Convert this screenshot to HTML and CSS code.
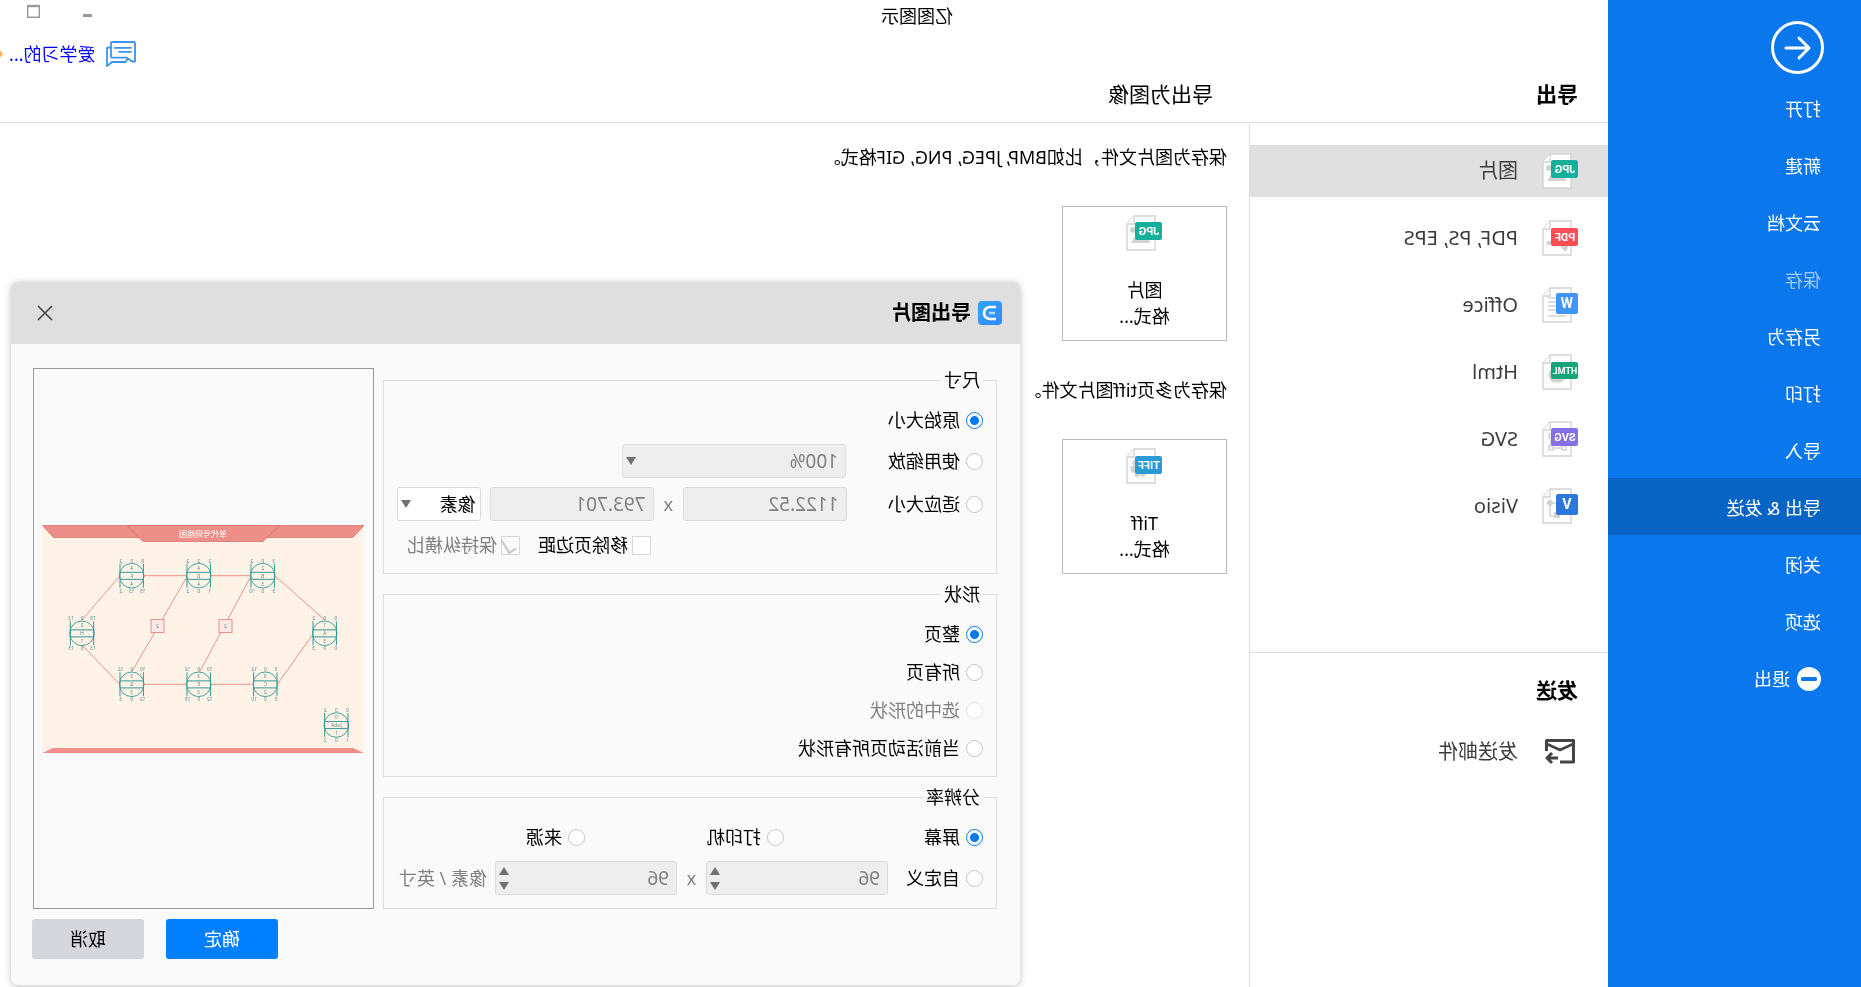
FILE: index.html
```
<!DOCTYPE html>
<html lang="zh-CN">
<head>
<meta charset="utf-8">
<title>亿图图示</title>
<link rel="stylesheet" href="styles.css">
</head>
<body>
<svg class="defs" aria-hidden="true">
  <defs>
    <g id="doc">
      <path d="M7 1H28L35 9V35H7Z" fill="#fff" stroke="#d3d3d3" stroke-width="1.4"/>
      <path d="M28 1V9H35" fill="#fff" stroke="#d3d3d3" stroke-width="1.4"/>
    </g>
    <g id="ring" fill="none" stroke="#2f9a94">
      <circle r="12.3" fill="#fff3e8" stroke-width="0.9"/>
      <path d="M-11.7-12V12M11.7-12V12M-11.7-3.4H11.7M-11.7 3.6H11.7"/>
    </g>
    <linearGradient id="brand" x1="1" y1="0" x2="0" y2="1">
      <stop offset="0" stop-color="#35a3fb"/><stop offset="1" stop-color="#2f8bfa"/>
    </linearGradient>
  </defs>
</svg>
<div class="app">
  <nav class="sidebar">
    <button class="back" aria-label="返回">
      <svg width="54" height="54" viewBox="0 0 54 54" fill="none" stroke="#fff" stroke-width="3" stroke-linecap="round" stroke-linejoin="round"><circle cx="27.500" cy="27.500" r="25"/><path d="M39 28H17M26 18L16 28L26 38"/></svg>
    </button>
    <ul class="menu">
      <li><a href="#">打开</a></li>
      <li><a href="#">新建</a></li>
      <li><a href="#">云文档</a></li>
      <li><a href="#" class="faded">保存</a></li>
      <li><a href="#">另存为</a></li>
      <li><a href="#">打印</a></li>
      <li><a href="#">导入</a></li>
      <li><a href="#" class="current">导出 &amp; 发送</a></li>
      <li><a href="#">关闭</a></li>
      <li><a href="#">选项</a></li>
      <li><a href="#"><svg width="24" height="24" viewBox="0 0 24 24"><circle cx="12" cy="12" r="12" fill="#fff"/><rect x="4" y="10" width="16" height="4" rx="1.5" fill="#0a77ec"/></svg>退出</a></li>
    </ul>
  </nav>

  <div class="workspace">
    <header class="top">
      <div class="titlebar">
        <span>亿图图示</span>
        <div class="window-buttons">
          <button aria-label="最小化"><svg width="10" height="14" viewBox="0 0 10 14"><path d="M0 11.500H9" stroke="#999" stroke-width="3"/></svg></button>
          <button aria-label="最大化"><svg width="13" height="14" viewBox="0 0 13 14"><path d="M.7 2H12.300V13.300H.7Z" fill="none" stroke="#999" stroke-width="1.4"/><path d="M0 2H13" stroke="#999" stroke-width="2.4"/></svg></button>
        </div>
      </div>
      <div class="account">
        <svg width="30" height="26" viewBox="0 0 30 26" fill="none" stroke="#3a94ef" stroke-width="1.8" stroke-linejoin="round" stroke-linecap="round"><path d="M1 2Q1 1 2 1H24Q25 1 25 2V15.500Q25 16.700 24 16.700H9L4 20.500H1Z"/><path d="M25.500 6.500H28Q29 6.500 29 7.500V25L24 21H10.500L8.500 18"/><path d="M5 6.800H21.500M5 10.800H17"/></svg>
        <a href="#">爱学习的...</a>
        <svg class="gem" width="3" height="10" viewBox="0 0 3 10"><path d="M0 5L4 0V10Z" fill="#fbb54c"/></svg>
      </div>
      <div class="headings">
        <h1>导出</h1>
        <h2>导出为图像</h2>
      </div>
    </header>

    <div class="columns">
      <aside class="kinds">
        <section class="export-kinds">
          <button class="kind selected">
            <svg width="36" height="36" viewBox="0 0 36 36"><use href="#doc"/><circle cx="29" cy="15" r="3" fill="#d3d3d3"/><path d="M11 28L16 22L22 24L26 20L31 28Z" fill="#d3d3d3"/><rect y="7" width="27" height="18" rx="2" fill="#14b09c"/><text class="badge" x="13" y="20">JPG</text></svg>
            图片
          </button>
          <button class="kind">
            <svg width="36" height="36" viewBox="0 0 36 36"><use href="#doc"/><path d="M10 26Q10 31 13 31Q16 30 18 25H30Q33 25 31 21H12Z" fill="#d3d3d3"/><rect y="8" width="27" height="18" rx="2" fill="#ff4d55"/><text class="badge" x="13" y="21">PDF</text></svg>
            PDF, PS, EPS
          </button>
          <button class="kind">
            <svg width="36" height="36" viewBox="0 0 36 36"><use href="#doc"/><path d="M20 11H30M20 15H30M20 19H30M20 23H30M12 29H30" stroke="#d3d3d3" stroke-width="1.5"/><rect y="6" width="22" height="21" rx="2" fill="#3f96ff"/><text class="badge big" x="11" y="21">W</text></svg>
            Office
          </button>
          <button class="kind">
            <svg width="36" height="36" viewBox="0 0 36 36"><use href="#doc"/><circle cx="21" cy="21" r="8.5" fill="#d3d3d3"/><path d="M12 27Q18 31 23 28" stroke="#fff" fill="none"/><rect y="8" width="27" height="17" rx="2" fill="#15a378"/><text class="badge small" x="13" y="20">HTML</text></svg>
            Html
          </button>
          <button class="kind">
            <svg width="36" height="36" viewBox="0 0 36 36"><use href="#doc"/><path d="M12 25H16V29H12ZM25 25H29V29H25ZM25 13H29V17H25ZM16 27H25M27 17V25" stroke="#d3d3d3" stroke-width="1.5" fill="none"/><rect y="7" width="27" height="18" rx="2" fill="#8570e6"/><text class="badge" x="13" y="20">SVG</text></svg>
            SVG
          </button>
          <button class="kind">
            <svg width="36" height="36" viewBox="0 0 36 36"><use href="#doc"/><path d="M28 11L32 15L28 19L24 15ZM18 24H24V30H18Z" fill="#d3d3d3"/><path d="M28 15V28H22M20 15H26" stroke="#d3d3d3" stroke-width="1.5" fill="none"/><rect y="6" width="22" height="21" rx="2" fill="#2b77da"/><text class="badge big" x="11" y="21">V</text></svg>
            Visio
          </button>
        </section>
        <section class="send-kinds">
          <h3>发送</h3>
          <button class="kind">
            <svg width="36" height="36" viewBox="-3 -5 36 36" fill="none" stroke="#444" stroke-width="3" stroke-linejoin="round"><path d="M15 23H1.500V1.500H28.500V12"/><path d="M2 5L15 11L28 5" stroke-width="2.6"/><path d="M17 19H28M23 14L28 19L23 24"/></svg>
            发送邮件
          </button>
        </section>
      </aside>

      <main class="formats">
        <p>保存为图片文件，比如BMP, JPEG, PNG, GIF格式。</p>
        <button class="card">
          <svg width="36" height="36" viewBox="0 0 36 36"><use href="#doc"/><circle cx="29" cy="15" r="3" fill="#d3d3d3"/><path d="M11 28L16 22L22 24L26 20L31 28Z" fill="#d3d3d3"/><rect y="7" width="27" height="18" rx="2" fill="#14b09c"/><text class="badge" x="13" y="20">JPG</text></svg>
          <span>图片<br>格式...</span>
        </button>
        <p>保存为多页tiff图片文件。</p>
        <button class="card">
          <svg width="36" height="36" viewBox="0 0 36 36"><use href="#doc"/><circle cx="22" cy="20" r="7" fill="none" stroke="#d3d3d3" stroke-width="5" stroke-dasharray="4 2"/><circle cx="22" cy="20" r="6" fill="none" stroke="#d3d3d3" stroke-width="3"/><rect y="8" width="27" height="18" rx="2" fill="#2a9bd5"/><text class="badge" x="13" y="21">TIFF</text></svg>
          <span>Tiff<br>格式...</span>
        </button>
      </main>
    </div>
  </div>

  <form class="dialog" role="dialog" aria-label="导出图片">
    <header class="dialog-title">
      <svg width="24" height="24" viewBox="0 0 24 24"><rect width="24" height="24" rx="4" fill="url(#brand)"/><path d="M6 6H12A6 6 0 0 1 12 18H6" fill="none" stroke="#fff" stroke-width="2.6"/><path d="M7 12H13" stroke="#b5daff" stroke-width="2.4"/></svg>
      <h2>导出图片</h2>
      <button type="button" class="close" aria-label="关闭"><svg width="16" height="16" viewBox="0 0 16 16"><path d="M1 1L15 15M15 1L1 15" stroke="#444" stroke-width="1.6"/></svg></button>
    </header>

    <div class="dialog-body">
      <div class="options">
        <fieldset>
          <legend>尺寸</legend>
          <div class="row"><label><input type="radio" name="size" checked>原始大小</label></div>
          <div class="row tall">
            <label class="lead"><input type="radio" name="size">使用缩放</label>
            <span class="drop zoom"><select disabled aria-label="缩放"><option>100%</option></select></span>
          </div>
          <div class="row tall">
            <label class="lead"><input type="radio" name="size">适应大小</label>
            <input class="box" type="text" value="1122.52" disabled aria-label="宽度">
            <span class="times">x</span>
            <input class="box" type="text" value="793.701" disabled aria-label="高度">
            <span class="drop unit"><select aria-label="单位"><option>像素</option></select></span>
          </div>
          <div class="row checks">
            <label><input type="checkbox">移除页边距</label>
            <label class="off"><input type="checkbox" checked disabled>保持纵横比</label>
          </div>
        </fieldset>

        <fieldset class="shapes">
          <legend>形状</legend>
          <div class="row"><label><input type="radio" name="shape" checked>整页</label></div>
          <div class="row"><label><input type="radio" name="shape">所有页</label></div>
          <div class="row"><label class="off"><input type="radio" name="shape" disabled>选中的形状</label></div>
          <div class="row"><label><input type="radio" name="shape">当前活动页所有形状</label></div>
        </fieldset>

        <fieldset>
          <legend>分辨率</legend>
          <div class="row thirds">
            <label><input type="radio" name="dpi" checked>屏幕</label>
            <label><input type="radio" name="dpi">打印机</label>
            <label><input type="radio" name="dpi">来源</label>
          </div>
          <div class="row tall">
            <label class="custom"><input type="radio" name="dpi">自定义</label>
            <span class="spin"><input type="number" value="96" disabled aria-label="水平分辨率"></span>
            <span class="times">x</span>
            <span class="spin"><input type="number" value="96" disabled aria-label="垂直分辨率"></span>
            <span class="per">像素 / 英寸</span>
          </div>
        </fieldset>
      </div>

      <div class="preview">
        <svg width="322" height="228" viewBox="0 0 322 228">
          <rect width="322" height="228" fill="#fff3e8"/>
          <g fill="#ee8e88" stroke="#d67670" stroke-width="0.8">
            <path d="M0 .5H321.500L310.500 12.500H11Z"/>
            <path d="M84.300 .5H237.300L221 16.500H101Z"/>
          </g>
          <path d="M11 223H311L321.500 228H0Z" fill="#ee8e88"/>
          <text class="sheet-title" x="161" y="12">单代号网络图</text>
          <path d="M39.300 95L89.300 50.700M51 109L86.700 159.300M112.700 50.700H153.700M113.300 51.700L164.300 146.700M177 51.700L232 146.700M177 50.700H220.300M244.300 51L282 95M281 121L244.300 159.300M177 159.300H220.300M112.700 159.300H153.700" fill="none" stroke="#f0908a"/>
          <g fill="#fbe9ea" stroke="#ee8e88"><rect x="200" y="94.500" width="13" height="13"/><rect x="132" y="94.500" width="13" height="13"/></g>
          <g class="node"><text x="206.500" y="103">2</text><text x="138.500" y="103">2</text></g>
          <g class="node" transform="translate(232.300 50.700)"><use href="#ring"/><text x="-11" y="-13">0</text><text y="-13">0</text><text x="11" y="-13">2</text><text y="-6">4</text><text y="2">F</text><text y="10">4</text><text x="-11" y="17">15</text><text y="17">13</text><text x="11" y="17">2</text></g>
          <g class="node" transform="translate(165.300 50.700)"><use href="#ring"/><text x="-11" y="-13">2</text><text y="-13">2</text><text x="11" y="-13">2</text><text y="-6">4</text><text y="2">D</text><text y="10">4</text><text x="-11" y="17">1</text><text y="17">0</text><text x="11" y="17">2</text></g>
          <g class="node" transform="translate(101.300 50.700)"><use href="#ring"/><text x="-11" y="-13">3</text><text y="-13">0</text><text x="11" y="-13">2</text><text y="-6">2</text><text y="2">B</text><text y="10">3</text><text x="-11" y="17">5</text><text y="17">0</text><text x="11" y="17">10</text></g>
          <g class="node" transform="translate(282 108.300)"><use href="#ring"/><text x="-11" y="-13">15</text><text y="-13">0</text><text x="11" y="-13">13</text><text y="-6">2</text><text y="2">H</text><text y="10">1</text><text x="-11" y="17">13</text><text y="17">0</text><text x="11" y="17">15</text></g>
          <g class="node" transform="translate(39.300 108.300)"><use href="#ring"/><text x="-11" y="-13">0</text><text y="-13">0</text><text x="11" y="-13">2</text><text y="-6">1</text><text y="2">A</text><text y="10">3</text><text x="-11" y="17">0</text><text y="17">0</text><text x="11" y="17">3</text></g>
          <g class="node" transform="translate(232.300 159.300)"><use href="#ring"/><text x="-11" y="-13">10</text><text y="-13">0</text><text x="11" y="-13">12</text><text y="-6">3</text><text y="2">G</text><text y="10">3</text><text x="-11" y="17">12</text><text y="17">0</text><text x="11" y="17">3</text></g>
          <g class="node" transform="translate(165.300 159.300)"><use href="#ring"/><text x="-11" y="-13">10</text><text y="-13">0</text><text x="11" y="-13">12</text><text y="-6">3</text><text y="2">E</text><text y="10">3</text><text x="-11" y="17">12</text><text y="17">0</text><text x="11" y="17">15</text></g>
          <g class="node" transform="translate(98.700 159.300)"><use href="#ring"/><text x="-11" y="-13">3</text><text y="-13">0</text><text x="11" y="-13">12</text><text y="-6">3</text><text y="2">C</text><text y="10">2</text><text x="-11" y="17">3</text><text y="17">0</text><text x="11" y="17">10</text></g>
          <g class="node" transform="translate(27.700 200)"><use href="#ring"/><text x="-11" y="-13">0</text><text y="-13">0</text><text x="11" y="-13">2</text><text y="-6">0</text><text y="2">JobA</text><text y="10">1</text><text x="-11" y="17">1</text><text y="17">0</text><text x="11" y="17">2</text></g>
        </svg>
      </div>
    </div>

    <footer class="dialog-actions">
      <button type="button" class="ok">确定</button>
      <button type="button" class="cancel">取消</button>
    </footer>
  </form>
</div>
</body>
</html>
```
FILE: styles.css
```
* { box-sizing: border-box; }

body {
  margin: 0;
  overflow: hidden;
  font: 18px/24px "Noto Sans", "Noto Sans CJK SC", sans-serif;
  font-weight: 400;
  color: #000;
  background: #fff;
}

button, input, select { font: inherit; color: inherit; }
button { border: 0; padding: 0; background: none; cursor: pointer; }
svg { flex: none; display: block; }
h1, h2, h3, p, ul { margin: 0; padding: 0; }
.defs { position: absolute; width: 0; height: 0; }

/* The whole window is shown mirrored */
.app {
  position: relative;
  display: flex;
  min-height: 100vh;
  transform: scaleX(-1);
}

/* Sidebar */
.sidebar { flex: 0 0 253px; background: #0a77ec; color: #fff; }
.back { display: block; margin: 20px 0 5px 36px; }
.menu { list-style: none; }
.menu a {
  display: flex;
  align-items: center;
  gap: 7px;
  height: 57px;
  padding: 2px 0 0 40px;
  color: #fff;
  text-decoration: none;
}
.menu .faded { color: #a0caf8; }
.menu .current { background: #0763c4; }

/* Top area */
.workspace { flex: 1; display: flex; flex-direction: column; min-width: 0; }
.top { border-bottom: 1px solid #dfdfdf; padding-bottom: 10px; }
.titlebar { display: flex; justify-content: space-between; height: 32px; padding: 4px 27px 0 655px; }
.window-buttons { display: flex; align-items: flex-start; gap: 42px; }
.account { display: flex; align-items: center; justify-content: flex-end; height: 44px; }
.account a { margin: 0 6px 0 11px; color: #00f; text-decoration: none; }
.headings { display: flex; align-items: center; height: 36px; }
.headings h1 { width: 360px; padding-left: 30px; font-size: 21px; }
.headings h2 { padding-left: 35px; font-size: 21px; font-weight: 400; }

.columns { flex: 1; display: flex; }
.kinds { flex: 0 0 359px; border-right: 1px solid #dfdfdf; }
.export-kinds {
  display: flex;
  flex-direction: column;
  gap: 15px;
  min-height: 530px;
  padding-top: 22px;
  border-bottom: 1px solid #dfdfdf;
}
.kind {
  display: flex;
  align-items: center;
  gap: 24px;
  width: 100%;
  height: 52px;
  padding-left: 30px;
  font-size: 20px;
  color: #3c3c3c;
  text-align: left;
}
.kind.selected { background: #e0e0e0; }
.send-kinds h3 { padding: 24px 0 23px 30px; font-size: 21px; line-height: 26px; }

.badge { font: bold 11px "Roboto", sans-serif; fill: #fff; text-anchor: middle; }
.badge.small { font-size: 9px; }
.badge.big { font-size: 14px; }

.formats { flex: 1; padding: 22px; }
.card {
  display: flex;
  flex-direction: column;
  align-items: center;
  gap: 26px;
  width: 165px;
  height: 135px;
  margin: 37px 0;
  padding-top: 8px;
  border: 1px solid #bbb;
  line-height: 26px;
}

/* Export dialog */
.dialog {
  position: absolute;
  top: 282px;
  right: 11px;
  width: 1009px;
  overflow: hidden;
  border-radius: 7px;
  background: #fafafa;
  box-shadow: 0 1px 7px rgba(0, 0, 0, 0.25);
}
.dialog-title {
  display: flex;
  align-items: center;
  gap: 7px;
  height: 62px;
  padding: 0 26px 0 18px;
  background: #dfdfdf;
}
.dialog-title h2 { flex: 1; font-size: 20px; }
.dialog-body { display: flex; gap: 9px; padding: 24px 22px 10px 23px; }
.options { flex: 1; display: flex; flex-direction: column; gap: 8px; min-width: 0; }

fieldset {
  display: flex;
  flex-direction: column;
  gap: 9px;
  min-width: 0;
  margin: 0;
  padding: 13px;
  border: 1px solid #dedede;
}
fieldset.shapes { gap: 8px; }
legend { padding: 0 3px; }
.row { display: flex; align-items: center; height: 30px; }
.row.tall { height: 34px; }
.row label { display: flex; align-items: center; gap: 6px; white-space: nowrap; }
.row .lead { width: 137px; }
.row .custom { width: 95px; }
.thirds label { flex: 0 0 199px; }
.off, .times, .per { color: #808080; }
.checks { justify-content: flex-end; gap: 18px; padding-right: 10px; }
.checks label { gap: 4px; }

input[type="radio"] {
  appearance: none;
  width: 17px;
  height: 17px;
  margin: 0;
  border: 1px solid #c4c4c4;
  border-radius: 50%;
  background: #fff;
}
input[type="radio"]:checked {
  border-color: #0a77ec;
  background: radial-gradient(circle, #0a77ec 4px, #fff 5px);
}
input[type="radio"]:disabled { border-color: #e2e2e2; }

input[type="checkbox"] {
  appearance: none;
  position: relative;
  width: 19px;
  height: 19px;
  margin: 0;
  border: 1px solid #d8d8d8;
  background: #fff;
}
input[type="checkbox"]:disabled { background: #fafafa; }
input[type="checkbox"]:checked::after {
  content: "";
  position: absolute;
  left: 6px;
  top: 0;
  width: 7px;
  height: 14px;
  border: solid #c8c8c8;
  border-width: 0 2px 2px 0;
  transform: rotate(32deg);
}

.box, .drop select, .spin input {
  appearance: none;
  height: 34px;
  padding: 0 7px;
  border: 1px solid #dcdcdc;
  border-radius: 3px;
  background: #fff;
  font-size: 19px;
}
.box { width: 164px; }
.box:disabled, select:disabled, .spin input { background: #eee; color: #808080; opacity: 1; }
.times { flex: 0 0 29px; text-align: center; }
.drop, .spin { position: relative; }
.drop select { display: block; width: 100%; }
.drop.zoom { width: 224px; }
.drop.unit { width: 84px; margin-left: 9px; }
.drop.unit select { padding: 0 4px; font-size: 18px; }
.drop::after, .spin::before, .spin::after {
  content: "";
  position: absolute;
  right: 4px;
  border: 5px solid transparent;
}
.drop::after { top: 13px; border-width: 8px 5px 0; border-top-color: #707070; }
.spin { width: 182px; }
.spin input { display: block; width: 100%; -moz-appearance: textfield; }
.spin input::-webkit-inner-spin-button { display: none; }
.spin::before { top: 6px; border-width: 0 5px 8px; border-bottom-color: #707070; z-index: 1; }
.spin::after { bottom: 5px; border-width: 8px 5px 0; border-top-color: #707070; }
.per { padding-left: 8px; white-space: nowrap; }

.preview {
  flex: 0 0 341px;
  display: flex;
  align-items: center;
  justify-content: center;
  border: 1px solid #999;
}
.sheet-title { font-size: 8px; fill: #fff; text-anchor: middle; }
.node text { font-size: 5px; fill: #4f8f8c; text-anchor: middle; }

.dialog-actions { display: flex; justify-content: flex-end; gap: 22px; padding: 0 21px 26px; }
.dialog-actions button { width: 112px; height: 40px; border-radius: 3px; }
.ok { background: #007fff; color: #fff; }
.cancel { background: #d5d7dc; }
```
